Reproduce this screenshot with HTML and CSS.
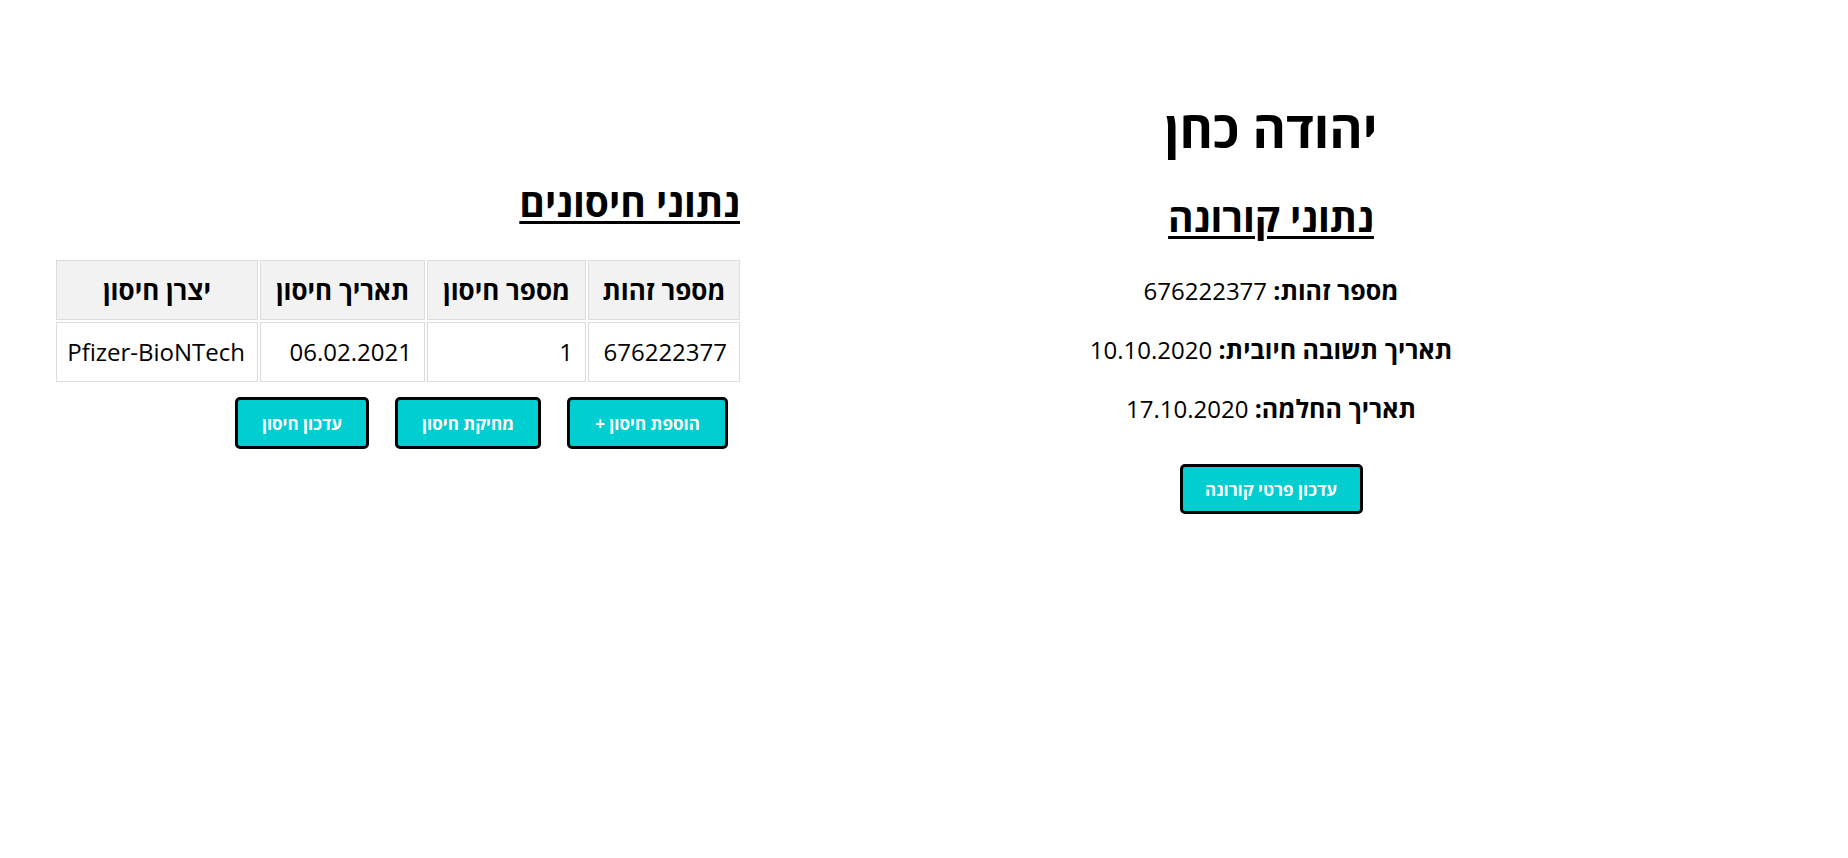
FILE: index.html
```html
<!DOCTYPE html>
<html lang="he" dir="rtl">
<head>
<meta charset="utf-8">
<title>יהודה כהן</title>
<link rel="stylesheet" href="styles.css">
</head>
<body>
<div class="page">
  <section class="corona">
    <h1 class="name">יהודה כחן</h1>
    <h2 class="section-title">נתוני קורונה</h2>
    <div class="facts">
      <p class="fact"><b>מספר זהות:</b> 676222377</p>
      <p class="fact"><b>תאריך תשובה חיובית:</b> 10.10.2020</p>
      <p class="fact"><b>תאריך החלמה:</b> 17.10.2020</p>
    </div>
    <button class="btn btn-corona">עדכון פרטי קורונה</button>
  </section>
  <section class="vaccines">
    <h2 class="section-title vac-title">נתוני חיסונים</h2>
    <table class="vac-table">
      <thead>
        <tr>
          <th class="c-id">מספר זהות</th>
          <th class="c-num">מספר חיסון</th>
          <th class="c-date">תאריך חיסון</th>
          <th class="c-maker">יצרן חיסון</th>
        </tr>
      </thead>
      <tbody>
        <tr>
          <td>676222377</td>
          <td>1</td>
          <td>06.02.2021</td>
          <td>Pfizer-BioNTech</td>
        </tr>
      </tbody>
    </table>
    <div class="vac-actions">
      <button class="btn btn-add">הוספת חיסון +</button>
      <button class="btn btn-del">מחיקת חיסון</button>
      <button class="btn btn-upd">עדכון חיסון</button>
    </div>
  </section>
</div>
</body>
</html>
```
FILE: styles.css
```css
html, body {
  margin: 0;
  padding: 0;
  background: #fff;
  color: #000;
}
body {
  font-family: "Open Sans", "DejaVu Sans", sans-serif;
}
.page {
  display: flex;
  flex-direction: row;
  align-items: flex-start;
  padding: 0 46px 0 54px;
}
.corona {
  flex: 1;
  display: flex;
  flex-direction: column;
  align-items: center;
  text-align: center;
  padding-top: 96px;
}
.name {
  margin: 0;
  font-size: 51px;
  line-height: 64px;
  font-weight: 700;
}
.section-title {
  margin: 0;
  font-size: 39px;
  line-height: 50px;
  font-weight: 700;
  text-decoration: underline;
  text-decoration-thickness: 3px;
  text-underline-offset: 4px;
}
.corona .section-title {
  margin-top: 32px;
}
.facts {
  display: flex;
  flex-direction: column;
  gap: 28px;
  margin-top: 33px;
}
.fact {
  margin: 0;
  font-size: 24px;
  line-height: 30px;
}
.fact b {
  font-size: 25px;
}
.btn {
  font-family: "Open Sans", "DejaVu Sans", sans-serif;
  background: #00ced1;
  color: #fff;
  font-weight: 700;
  font-size: 17px;
  border: 3px solid #000;
  border-radius: 5px;
  height: 52px;
  padding: 0 10px;
  cursor: pointer;
}
.btn-corona {
  margin-top: 40px;
  width: 183px;
  height: 50px;
}
.vaccines {
  width: 686px;
  display: flex;
  flex-direction: column;
  align-items: stretch;
  padding-top: 177px;
}
.vac-title {
  text-align: right;
}
.vac-table {
  margin-top: 31px;
  border-collapse: separate;
  border-spacing: 2px;
  margin-right: -2px;
  table-layout: fixed;
  width: 688px;
  font-size: 24px;
}
.vac-table th,
.vac-table td {
  border: 1px solid #dcdcdc;
  height: 60px;
  padding: 0 12px;
  box-sizing: border-box;
  line-height: 30px;
  white-space: nowrap;
}
.vac-table th {
  background: #f2f2f2;
  font-weight: 700;
  font-size: 26px;
  text-align: center;
}
.vac-table td {
  text-align: right;
}
.c-id { width: 152px; }
.c-num { width: 159px; }
.c-date { width: 165px; }
.c-maker { width: 202px; }
.vac-actions {
  display: flex;
  gap: 26px;
  margin-top: 13px;
  padding-right: 12px;
}
.btn-add { width: 161px; }
.btn-del { width: 146px; }
.btn-upd { width: 134px; }
```
